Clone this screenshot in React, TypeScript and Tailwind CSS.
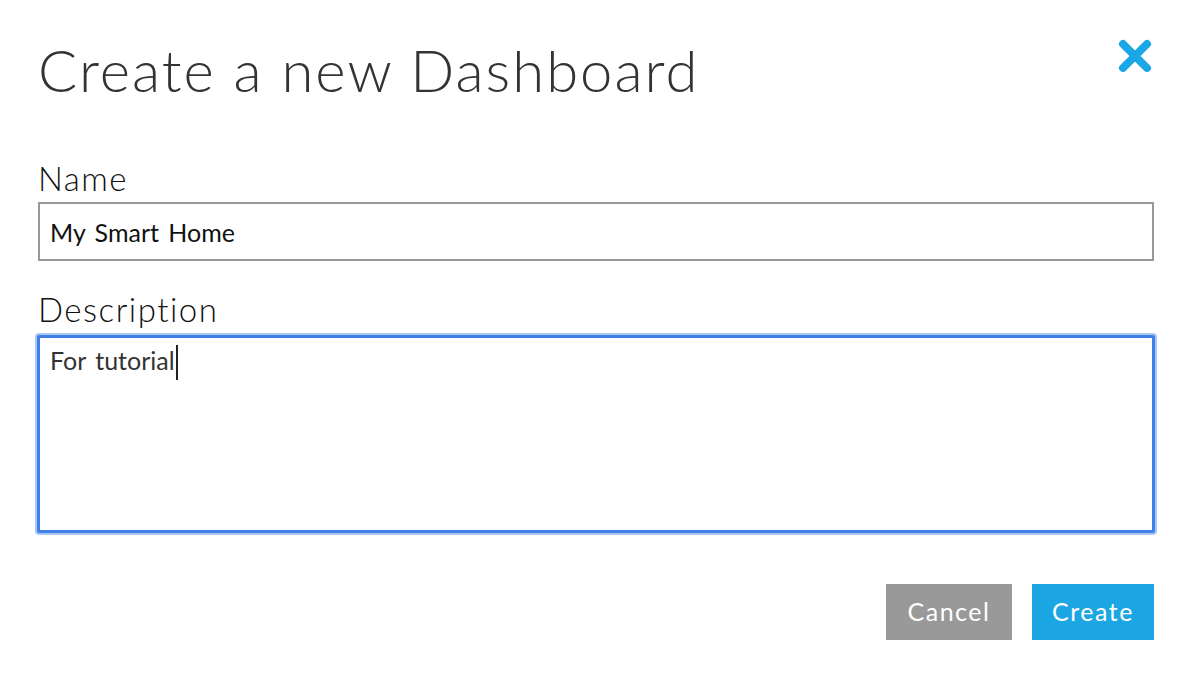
import React, { useState } from 'react';

export default function App() {
  const [name, setName] = useState('My Smart Home');
  const [description, setDescription] = useState('For tutorial');

  return (
    <div className="w-[1192px] h-[676px] bg-white font-['Lato','Open_Sans',sans-serif] text-[#333]">
      <div className="px-[38px] pt-[34px]">
        {/* Header */}
        <div className="flex items-start justify-between">
          <h1 className="text-[58px] leading-[72px] font-light tracking-[2px]">Create a new Dashboard</h1>
          <button className="mt-[5px] mr-[1px] w-[36px] h-[34px] flex items-center justify-center">
            <svg viewBox="0 0 36 34" className="w-[36px] h-[34px]">
              <path d="M6 5 L30 29 M30 5 L6 29" stroke="#1ba7e5" strokeWidth="8" strokeLinecap="round" fill="none" />
            </svg>
          </button>
        </div>

        {/* Name */}
        <label className="block mt-[52px] text-[33px] leading-[40px] tracking-[1.5px] font-light text-[#111]">Name</label>
        <input
          value={name}
          onChange={(e) => setName(e.target.value)}
          className="block w-full h-[59px] mt-[4px] px-[10px] border-2 border-[#999] text-[25px] [word-spacing:3px] font-normal text-[#111] outline-none"
        />

        {/* Description */}
        <label className="block mt-[28px] text-[33px] leading-[40px] tracking-[1.5px] font-light text-[#111]">Description</label>
        <div className="-mx-[3px] mt-[4px] rounded-[4px] p-[2px] bg-[#a9c8f6]">
          <div className="relative border-[3px] border-[#3f7fe6] rounded-[2px] bg-white h-[198px] px-[10px] pt-[7px]">
            <textarea
              value={description}
              onChange={(e) => setDescription(e.target.value)}
              className="w-full h-full resize-none outline-none text-[25px] leading-[30px] [word-spacing:3px] font-normal text-[#333]"
            />
            {/* caret */}
            <span className="absolute left-[136px] top-[7px] w-[2px] h-[35px] bg-[#222]" />
          </div>
        </div>

        {/* Actions */}
        <div className="flex justify-end gap-[20px] mt-[49px]">
          <button className="w-[126px] h-[56px] bg-[#999] text-white text-[25px] tracking-[1.5px]">Cancel</button>
          <button className="w-[122px] h-[56px] bg-[#1ca7e4] text-white text-[25px] tracking-[1.5px]">Create</button>
        </div>
      </div>
    </div>
  );
}
